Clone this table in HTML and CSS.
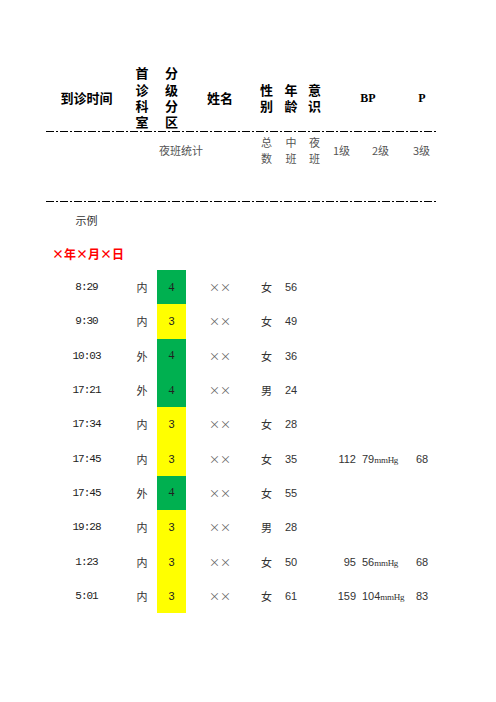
FILE: index.html
```html
<!DOCTYPE html>
<html lang="zh-CN">
<head>
<meta charset="utf-8">
<title>到诊时间</title>
<link rel="stylesheet" href="styles.css">
</head>
<body>
<div class="sheet">
  <div class="row head">
    <div class="h">到诊时间</div>
    <div class="h v">首<br>诊<br>科<br>室</div>
    <div class="h v">分<br>级<br>分<br>区</div>
    <div class="h">姓名</div>
    <div class="h v">性<br>别</div>
    <div class="h v">年<br>龄</div>
    <div class="h v">意<br>识</div>
    <div class="h lat">BP</div>
    <div class="h lat pcol">P</div>
  </div>
  <div class="rule"></div>
  <div class="row stats">
    <div class="stat-title">夜班统计</div>
    <div class="v2">总<br>数</div>
    <div class="v2">中<br>班</div>
    <div class="v2">夜<br>班</div>
    <div class="levels"><span>1级</span><span>2级</span></div>
    <div class="lvl3">3级</div>
  </div>
  <div class="spacer"></div>
  <div class="rule"></div>
  <div class="row example"><div class="center">示例</div></div>
  <div class="row date"><div class="date-text">×年×月×日</div></div>

  <div class="row data">
    <div class="time">8:29</div><div class="dept">内</div><div class="grade g4">4</div><div class="name">××</div><div class="sex">女</div><div class="age">56</div><div class="cons"></div><div class="bp"></div><div class="p"></div>
  </div>
  <div class="row data">
    <div class="time">9:30</div><div class="dept">内</div><div class="grade g3">3</div><div class="name">××</div><div class="sex">女</div><div class="age">49</div><div class="cons"></div><div class="bp"></div><div class="p"></div>
  </div>
  <div class="row data">
    <div class="time">10:03</div><div class="dept">外</div><div class="grade g4">4</div><div class="name">××</div><div class="sex">女</div><div class="age">36</div><div class="cons"></div><div class="bp"></div><div class="p"></div>
  </div>
  <div class="row data">
    <div class="time">17:21</div><div class="dept">外</div><div class="grade g4">4</div><div class="name">××</div><div class="sex">男</div><div class="age">24</div><div class="cons"></div><div class="bp"></div><div class="p"></div>
  </div>
  <div class="row data">
    <div class="time">17:34</div><div class="dept">内</div><div class="grade g3">3</div><div class="name">××</div><div class="sex">女</div><div class="age">28</div><div class="cons"></div><div class="bp"></div><div class="p"></div>
  </div>
  <div class="row data">
    <div class="time">17:45</div><div class="dept">内</div><div class="grade g3">3</div><div class="name">××</div><div class="sex">女</div><div class="age">35</div><div class="cons"></div><div class="bp"><span class="sys">112</span><span class="dia">79<span class="unit">mmHg</span></span></div><div class="p">68</div>
  </div>
  <div class="row data">
    <div class="time">17:45</div><div class="dept">外</div><div class="grade g4">4</div><div class="name">××</div><div class="sex">女</div><div class="age">55</div><div class="cons"></div><div class="bp"></div><div class="p"></div>
  </div>
  <div class="row data">
    <div class="time">19:28</div><div class="dept">内</div><div class="grade g3">3</div><div class="name">××</div><div class="sex">男</div><div class="age">28</div><div class="cons"></div><div class="bp"></div><div class="p"></div>
  </div>
  <div class="row data">
    <div class="time">1:23</div><div class="dept">内</div><div class="grade g3">3</div><div class="name">××</div><div class="sex">女</div><div class="age">50</div><div class="cons"></div><div class="bp"><span class="sys">95</span><span class="dia">56<span class="unit">mmHg</span></span></div><div class="p">68</div>
  </div>
  <div class="row data">
    <div class="time">5:01</div><div class="dept">内</div><div class="grade g3">3</div><div class="name">××</div><div class="sex">女</div><div class="age">61</div><div class="cons"></div><div class="bp"><span class="sys">159</span><span class="dia">104<span class="unit">mmHg</span></span></div><div class="p">83</div>
  </div>
</div>
</body>
</html>
```

FILE: styles.css
```css
html, body {
  margin: 0;
  padding: 0;
  background: #fff;
}
body {
  font-family: "Noto Sans CJK SC", "Noto Sans", sans-serif;
  font-size: 11px;
  color: #333;
}
.sheet {
  width: 392px;
  margin-left: 46px;
  padding-top: 65px;
}
.row {
  display: grid;
  grid-template-columns: 81px 30px 29px 68px 25px 24px 23px 84px 28px;
  align-items: center;
}
.head {
  height: 66px;
  text-align: center;
  font-weight: bold;
  font-size: 13px;
  color: #000;
  line-height: 16px;
}
.h.v {
  line-height: 16.3px;
}
.lat {
  font-family: "Liberation Serif", serif;
  font-size: 12px;
}
.pcol {
  padding-right: 4px;
}
.rule {
  height: 1px;
  background: repeating-linear-gradient(to right, #000 0 8px, transparent 8px 10px, #000 10px 12px, transparent 12px 14px);
}
.stats {
  height: 36px;
  color: #555;
  line-height: 16px;
}
.stat-title {
  grid-column: 2 / 5;
  padding-left: 32px;
}
.v2 {
  text-align: center;
}
.levels {
  display: flex;
  justify-content: space-between;
  padding: 0 21px 0 7px;
}
.lvl3 {
  padding-left: 3px;
}
.spacer {
  height: 33px;
}
.example {
  height: 35px;
}
.center {
  text-align: center;
}
.date {
  height: 33px;
}
.date-text {
  grid-column: 1 / 5;
  padding-left: 6px;
  color: #f00;
  font-weight: bold;
  font-size: 12px;
}
.data {
  height: 34.3px;
  align-items: stretch;
}
.data > div {
  display: flex;
  align-items: center;
}
.time {
  justify-content: center;
  font-family: "Liberation Mono", monospace;
  letter-spacing: -1px;
  color: #222;
}
.dept, .name, .sex {
  justify-content: center;
}
.name {
  color: #666;
}
.grade {
  justify-content: center;
  color: #222;
}
.g4 {
  background: #00b050;
  font-family: "Liberation Serif", serif;
  font-size: 12px;
}
.g3 {
  background: #ffff00;
  font-family: "Liberation Sans", sans-serif;
}
.age {
  padding-left: 6px;
  font-family: "Liberation Sans", sans-serif;
}
.bp {
  font-family: "Liberation Sans", sans-serif;
}
.sys {
  width: 30px;
  flex: none;
  text-align: right;
}
.dia {
  padding-left: 6px;
}
.unit {
  font-family: "Liberation Serif", serif;
  font-size: 9px;
  letter-spacing: -0.3px;
}
.p {
  justify-content: center;
  padding-right: 4px;
  font-family: "Liberation Sans", sans-serif;
}
```
